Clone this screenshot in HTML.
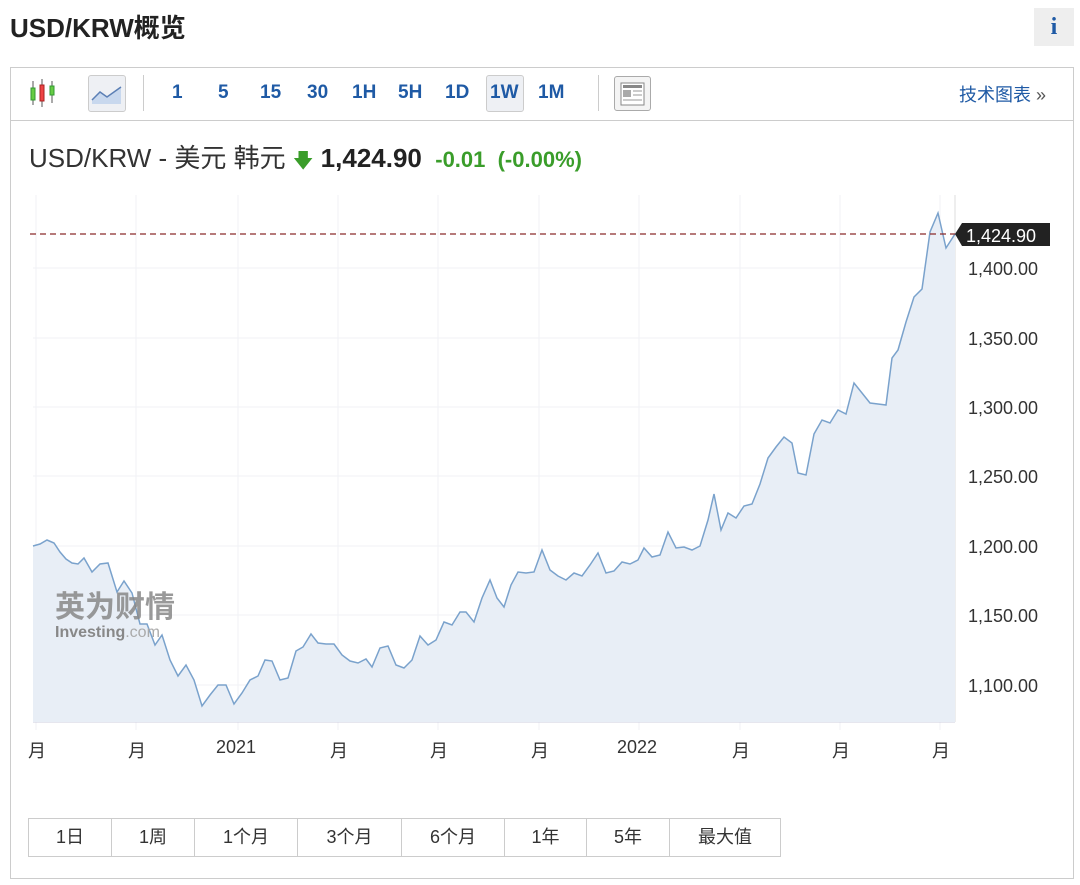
<!DOCTYPE html>
<html><head><meta charset="utf-8"><style>
*{margin:0;padding:0;box-sizing:border-box}
body{width:1080px;height:885px;background:#fff;font-family:"Liberation Sans","Noto Sans CJK SC",sans-serif;position:relative;overflow:hidden;color:#333}
.a{position:absolute}
.tb{color:#1f5aa5;font-weight:bold;font-size:19px}
.rb{position:absolute;top:818px;height:39px;border:1px solid #ccc;border-right:none;font-size:18px;color:#333;text-align:center;line-height:37px;background:#fff}
.yl{position:absolute;left:968px;font-size:18px;color:#333}
.xl{position:absolute;top:737px;font-size:18px;color:#333}
</style></head><body>
<div class="a" style="left:10px;top:8px;font-size:26px;font-weight:bold;color:#222">USD/KRW概览</div>
<div class="a" style="left:1034px;top:8px;width:40px;height:38px;background:#eee;color:#1f5aa5;font:bold 24px 'Liberation Serif',serif;text-align:center;line-height:38px">i</div>
<div class="a" style="left:10px;top:67px;width:1064px;height:812px;border:1px solid #ccc"></div>
<div class="a" style="left:11px;top:120px;width:1062px;height:1px;background:#ccc"></div>
<svg class="a" style="left:28px;top:78px" width="32" height="30"><g stroke="#555" stroke-width="1"><line x1="5" y1="3" x2="5" y2="27"/><line x1="14" y1="1" x2="14" y2="29"/><line x1="24" y1="3" x2="24" y2="25"/></g><rect x="3" y="10" width="4" height="12" fill="#6c4" stroke="#393"/><rect x="12" y="7" width="4" height="16" fill="#e44" stroke="#a22"/><rect x="22" y="8" width="4" height="9" fill="#6c4" stroke="#393"/></svg>
<div class="a" style="left:88px;top:75px;width:38px;height:37px;background:#eef0f4;border:1px solid #ccc;border-radius:3px"></div>
<svg class="a" style="left:91px;top:82px" width="32" height="24"><path d="M1 18 L9 10 L16 15 L30 5 L30 22 L1 22Z" fill="#c8d8ee"/><path d="M1 18 L9 10 L16 15 L30 5" fill="none" stroke="#5b7fb5" stroke-width="1.5"/></svg>
<div class="a" style="left:143px;top:75px;width:1px;height:36px;background:#ccc"></div>
<div class="a tb" style="left:172px;top:82px">1</div>
<div class="a tb" style="left:218px;top:82px">5</div>
<div class="a tb" style="left:260px;top:82px">15</div>
<div class="a tb" style="left:307px;top:82px">30</div>
<div class="a tb" style="left:352px;top:82px">1H</div>
<div class="a tb" style="left:398px;top:82px">5H</div>
<div class="a tb" style="left:445px;top:82px">1D</div>
<div class="a" style="left:486px;top:75px;width:38px;height:37px;background:#eef0f4;border:1px solid #ccc;border-radius:3px"></div>
<div class="a tb" style="left:490px;top:82px">1W</div>
<div class="a tb" style="left:538px;top:82px">1M</div>
<div class="a" style="left:598px;top:75px;width:1px;height:36px;background:#ccc"></div>
<div class="a" style="left:614px;top:76px;width:37px;height:35px;border:1px solid #aaa;border-radius:3px;background:#f4f4f4"></div>
<svg class="a" style="left:620px;top:82px" width="25" height="24"><rect x="1" y="1" width="23" height="22" fill="#fff" stroke="#888"/><rect x="3" y="3" width="19" height="3" fill="#888"/><rect x="3" y="8" width="8" height="7" fill="#aaa"/><g stroke="#999"><line x1="13" y1="9" x2="22" y2="9"/><line x1="13" y1="13" x2="22" y2="13"/><line x1="3" y1="18" x2="22" y2="18"/></g></svg>
<div class="a" style="left:959px;top:81px;font-size:18px;color:#1f5aa5">技术图表 <span style="color:#555">»</span></div>
<div class="a" style="left:29px;top:138px;font-size:26px;color:#333;white-space:nowrap">USD/KRW - 美元 韩元 <span style="color:#3a9d2a;font-size:20px">🡇</span> <b style="color:#222">1,424.90</b> <span style="color:#3a9d2a;font-size:22px;font-weight:bold">&nbsp;-0.01 &nbsp;(-0.00%)</span></div>
<svg class="a" style="left:0;top:0" width="1080" height="885">
<g stroke="#f0f2f5" stroke-width="1">
<line x1="33" y1="268" x2="955" y2="268"/><line x1="33" y1="338" x2="955" y2="338"/><line x1="33" y1="407" x2="955" y2="407"/><line x1="33" y1="476" x2="955" y2="476"/><line x1="33" y1="546" x2="955" y2="546"/><line x1="33" y1="615" x2="955" y2="615"/><line x1="33" y1="685" x2="955" y2="685"/>
<line x1="36" y1="195" x2="36" y2="730"/><line x1="136" y1="195" x2="136" y2="730"/><line x1="238" y1="195" x2="238" y2="730"/><line x1="338" y1="195" x2="338" y2="730"/><line x1="438" y1="195" x2="438" y2="730"/><line x1="539" y1="195" x2="539" y2="730"/><line x1="639" y1="195" x2="639" y2="730"/><line x1="740" y1="195" x2="740" y2="730"/><line x1="840" y1="195" x2="840" y2="730"/><line x1="940" y1="195" x2="940" y2="730"/>
</g>
<line x1="33" y1="722" x2="955" y2="722" stroke="#ccd" />
<line x1="955" y1="195" x2="955" y2="722" stroke="#ddd"/>
<path fill="#e8eef6" stroke="none" d="M33,546 40,544 47,540 54,543 60,552 66,559 72,563 78,564 84,558 92,572 100,564 108,563 117,592 124,581 132,593 140,624 147,624 155,645 162,635 170,660 178,676 186,665 194,680 202,706 210,695 218,685 226,685 234,704 242,693 250,680 258,676 265,660 272,661 280,680 288,678 296,651 303,647 311,634 318,643 326,644 334,644 342,655 350,661 358,663 366,659 372,667 380,648 388,646 396,665 404,668 412,660 420,636 428,645 436,640 444,622 452,625 460,612 466,612 474,622 482,598 490,580 497,598 504,607 511,585 518,572 526,573 534,572 542,550 550,570 558,576 566,580 574,573 582,576 590,565 598,553 606,573 614,571 622,562 630,564 638,560 644,548 652,557 660,555 668,532 676,548 684,547 692,550 700,546 708,520 714,494 721,530 728,513 736,518 744,506 752,504 760,484 768,458 776,447 784,437 792,443 798,473 806,475 814,434 822,420 830,423 838,410 846,414 854,383 862,393 870,403 878,404 886,405 892,358 898,350 906,322 914,297 922,289 930,232 938,213 946,248 955,234 L955,722 L33,722Z"/>
<polyline fill="none" stroke="#7aa2cc" stroke-width="1.5" points="33,546 40,544 47,540 54,543 60,552 66,559 72,563 78,564 84,558 92,572 100,564 108,563 117,592 124,581 132,593 140,624 147,624 155,645 162,635 170,660 178,676 186,665 194,680 202,706 210,695 218,685 226,685 234,704 242,693 250,680 258,676 265,660 272,661 280,680 288,678 296,651 303,647 311,634 318,643 326,644 334,644 342,655 350,661 358,663 366,659 372,667 380,648 388,646 396,665 404,668 412,660 420,636 428,645 436,640 444,622 452,625 460,612 466,612 474,622 482,598 490,580 497,598 504,607 511,585 518,572 526,573 534,572 542,550 550,570 558,576 566,580 574,573 582,576 590,565 598,553 606,573 614,571 622,562 630,564 638,560 644,548 652,557 660,555 668,532 676,548 684,547 692,550 700,546 708,520 714,494 721,530 728,513 736,518 744,506 752,504 760,484 768,458 776,447 784,437 792,443 798,473 806,475 814,434 822,420 830,423 838,410 846,414 854,383 862,393 870,403 878,404 886,405 892,358 898,350 906,322 914,297 922,289 930,232 938,213 946,248 955,234"/>
<line x1="30" y1="234" x2="955" y2="234" stroke="#8b2a2a" stroke-width="1.2" stroke-dasharray="6,4"/>
<path d="M955,234 L962,223 L1050,223 L1050,246 L962,246Z" fill="#222"/>
<text x="966" y="242" fill="#fff" font-size="18" font-family="Liberation Sans">1,424.90</text>
<text x="55" y="617" fill="#888" font-size="30" font-weight="bold" font-family="Noto Sans CJK SC,sans-serif" opacity="0.85">英为财情</text>
<text x="55" y="637" fill="#888" font-size="16" font-weight="bold" font-family="Liberation Sans">Investing<tspan font-weight="normal" fill="#aaa">.com</tspan></text>
</svg>
<div class="yl" style="top:259px">1,400.00</div>
<div class="yl" style="top:329px">1,350.00</div>
<div class="yl" style="top:398px">1,300.00</div>
<div class="yl" style="top:467px">1,250.00</div>
<div class="yl" style="top:537px">1,200.00</div>
<div class="yl" style="top:606px">1,150.00</div>
<div class="yl" style="top:676px">1,100.00</div>
<div class="xl" style="left:28px">月</div>
<div class="xl" style="left:128px">月</div>
<div class="xl" style="left:216px">2021</div>
<div class="xl" style="left:330px">月</div>
<div class="xl" style="left:430px">月</div>
<div class="xl" style="left:531px">月</div>
<div class="xl" style="left:617px">2022</div>
<div class="xl" style="left:732px">月</div>
<div class="xl" style="left:832px">月</div>
<div class="xl" style="left:932px">月</div>
<div class="rb" style="left:28px;width:83px">1日</div>
<div class="rb" style="left:111px;width:83px">1周</div>
<div class="rb" style="left:194px;width:103px">1个月</div>
<div class="rb" style="left:297px;width:104px">3个月</div>
<div class="rb" style="left:401px;width:103px">6个月</div>
<div class="rb" style="left:504px;width:82px">1年</div>
<div class="rb" style="left:586px;width:83px">5年</div>
<div class="rb" style="left:669px;width:112px;border-right:1px solid #ccc">最大值</div>
</body></html>
